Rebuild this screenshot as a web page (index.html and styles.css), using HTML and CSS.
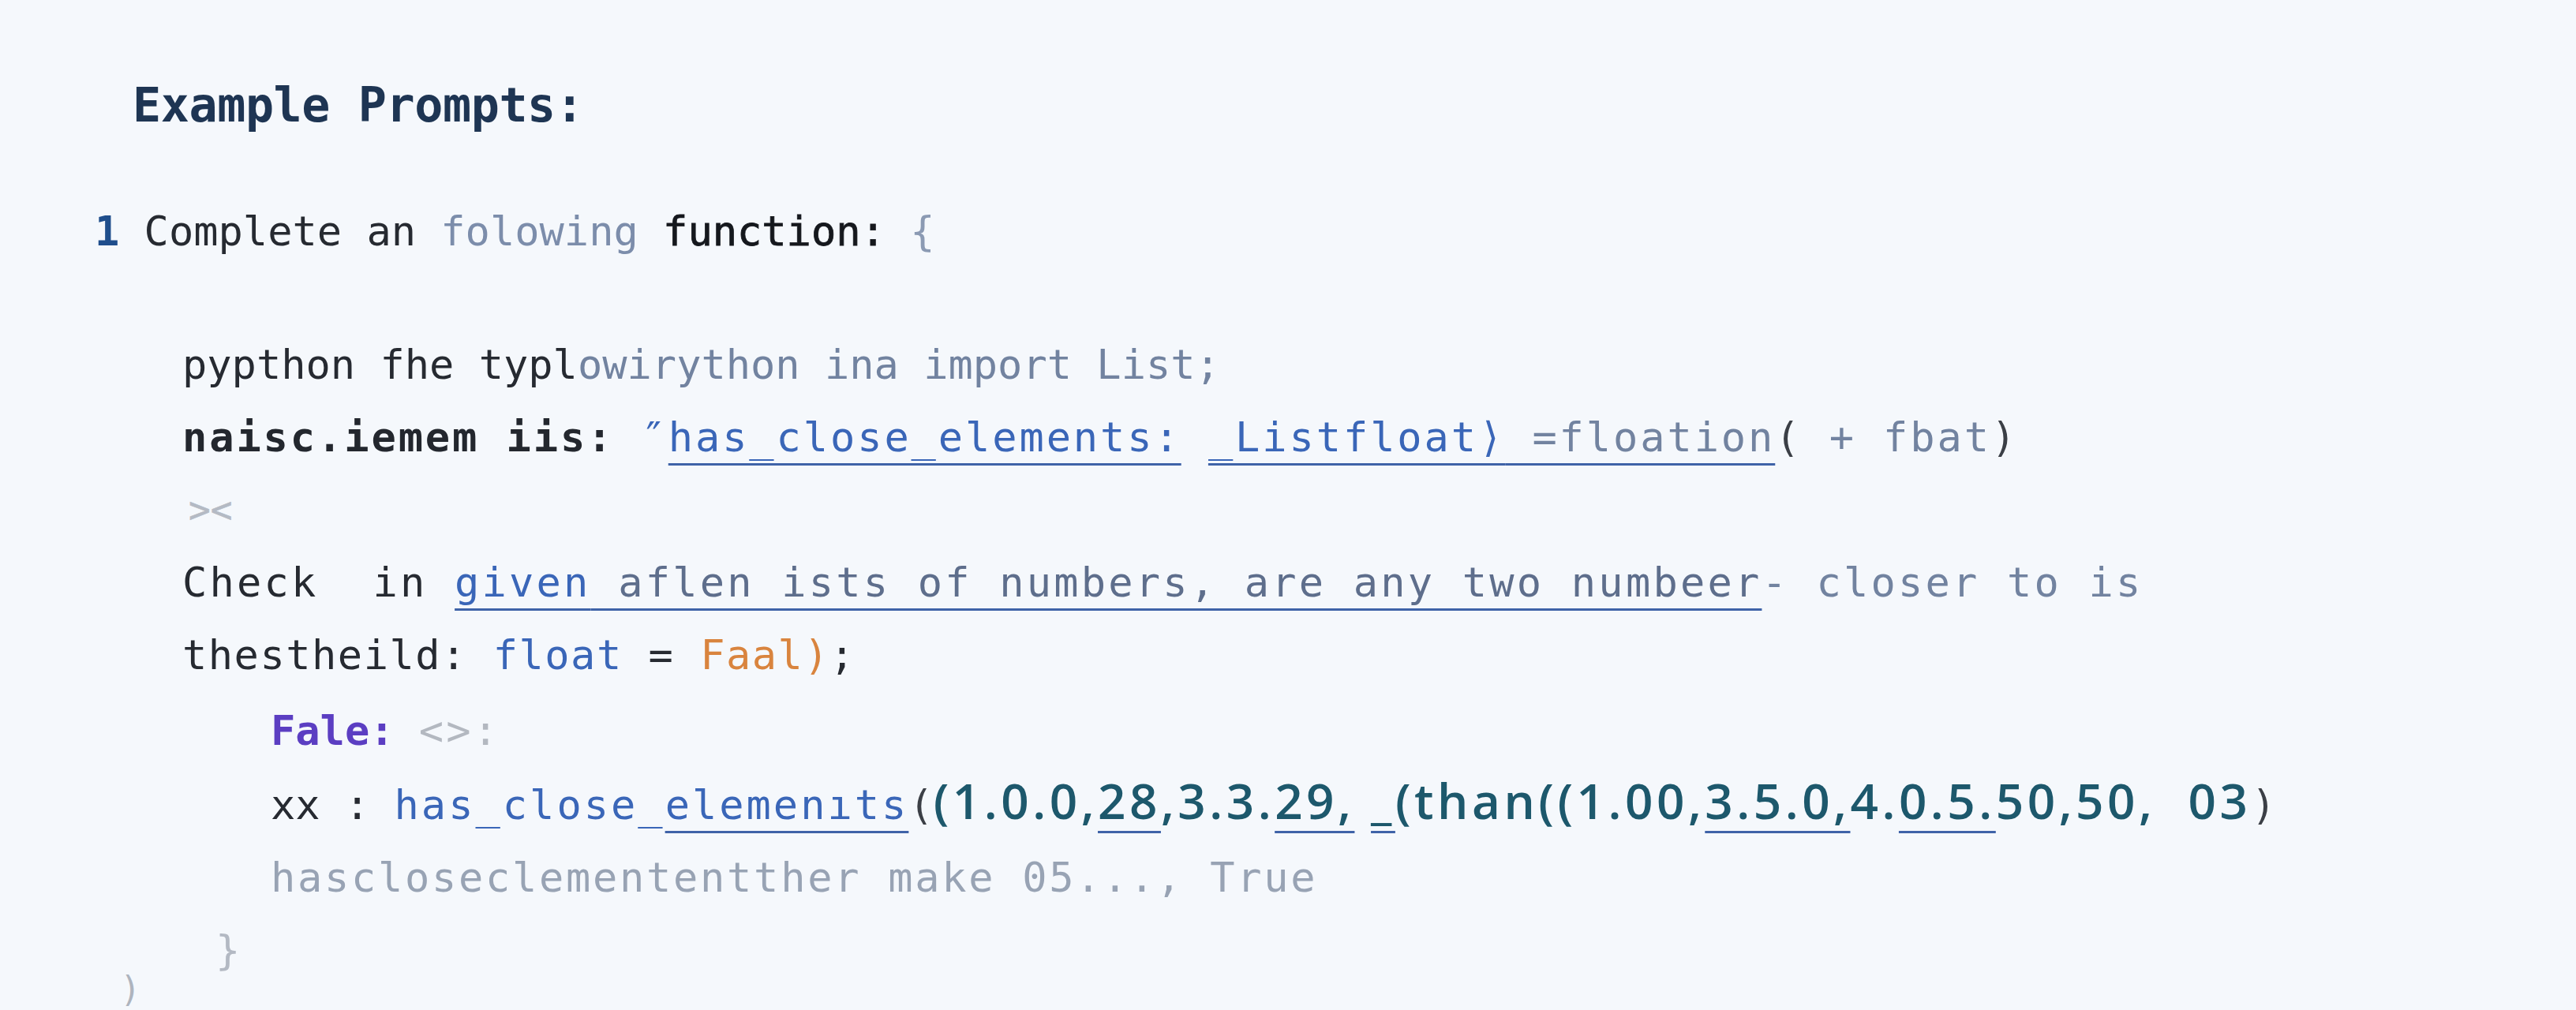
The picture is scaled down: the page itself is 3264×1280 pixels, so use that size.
FILE: index.html
```html
<!DOCTYPE html>
<html lang="en">
<head>
<meta charset="utf-8">
<title>Example Prompts</title>
<link rel="stylesheet" href="styles.css">
</head>
<body>
<main class="page">
  <h1 class="heading">Example Prompts:</h1>
  <div class="code">
    <div class="line l-first"><span class="num">1</span> Complete an <span class="mute">folowing</span> <span class="strong">function:</span> <span class="brace">{</span></div>
    <div class="block">
      <div class="line l-import">pypthon fhe typl<span class="mute2">owirython ina import List;</span></div>
      <div class="line l-sig"><b class="bold">naisc.iemem iis:</b> <span class="blue">″<span class="ul">has_close_elements:</span> <span class="ul">_Listfloat⟩</span></span><span class="mute2 ul"> =floation</span><span class="paren">(</span><span class="mute2"> + fbat</span><span class="paren">)</span></div>
      <div class="line l-tag">&gt;&lt;</div>
      <div class="line l-check">Check  in <span class="blue ul">given</span><span class="slate ul"> aflen ists of numbers, are any two numbeer</span><span class="mute2">- closer to is</span></div>
      <div class="line l-thr">thestheild: <span class="blue">float</span> = <span class="orange">Faal)</span>;</div>
      <div class="inner">
        <div class="line l-fale"><b class="purple">Fale:</b> <span class="faint">&lt;&gt;:</span></div>
        <div class="line l-call">xx : <span class="blue call-fn">has_close_<span class="ul">elemenıts</span></span><span class="paren">(</span><span class="teal">(1.0.0,<span class="ul">28</span>,3.3.<span class="ul">29,</span> <span class="ul">_</span>(than((1.00,<span class="ul">3.5.0,</span>4.<span class="ul">0.5.</span>50,50,  03</span><span class="paren">)</span></div>
        <div class="line l-res">hascloseclemententther make 05..., True</div>
      </div>
      <div class="line l-close">}</div>
    </div>
    <div class="line l-end">)</div>
  </div>
</main>
</body>
</html>
```

FILE: styles.css
```css
html, body {
  margin: 0;
  padding: 0;
  background: #f5f8fc;
}

.page {
  padding: 87px 0 0 0;
  font-family: "DejaVu Sans Mono", "Liberation Mono", monospace;
  color: #262a31;
}

.heading {
  margin: 0 0 68px 0;
  padding-left: 168px;
  font-size: 60px;
  line-height: 92px;
  font-weight: bold;
  color: #1e3553;
  letter-spacing: -0.4px;
}

.code {
  padding-left: 120px;
  font-size: 52px;
}

.line {
  line-height: 92px;
  white-space: pre;
}

.block {
  margin-top: 77px;
  padding-left: 111px;
}

.inner {
  padding-left: 112px;
}

.num {
  font-weight: bold;
  color: #1f4e8c;
}

.strong {
  color: #15181d;
  -webkit-text-stroke: 0.8px #15181d;
}

.mute {
  color: #7c8dab;
}

.brace {
  color: #8b9ab3;
}

.mute2 {
  color: #7283a0;
}

.slate {
  color: #5e6e8c;
}

.bold {
  font-weight: bold;
  color: #23272e;
}

.blue {
  color: #3a66b8;
}

.ul {
  text-decoration: underline;
  text-decoration-color: #3f63a8;
  text-decoration-thickness: 3px;
  text-underline-offset: 15px;
}

.paren {
  color: #3b3f46;
}

.l-first {
  letter-spacing: 0;
}

.l-import {
  letter-spacing: 0;
}

.l-sig {
  letter-spacing: 2.9px;
}

.l-tag {
  color: #b4bac4;
  font-size: 46px;
  padding-left: 8px;
  -webkit-text-stroke: 0.6px #b4bac4;
}

.l-check {
  letter-spacing: 3.2px;
}

.l-thr {
  letter-spacing: 1.5px;
}

.orange {
  color: #d9843e;
}

.l-fale {
  padding-top: 4px;
  margin-bottom: -4px;
}

.purple {
  color: #5b3ec2;
}

.faint {
  color: #b3b8c0;
  font-size: 52px;
  letter-spacing: 3px;
}

.call-fn {
  letter-spacing: 3px;
}

.teal {
  color: #1d586c;
  font-family: "Open Sans", "Noto Sans", sans-serif;
  font-weight: 600;
  font-size: 62px;
  letter-spacing: 4.5px;
}

.l-res {
  color: #98a3b4;
  letter-spacing: 2.7px;
}

.l-close {
  color: #b3b9c3;
  padding-left: 42px;
}

.l-end {
  color: #aeb4be;
  margin-top: -42px;
  padding-left: 32px;
  font-size: 44px;
}
```
